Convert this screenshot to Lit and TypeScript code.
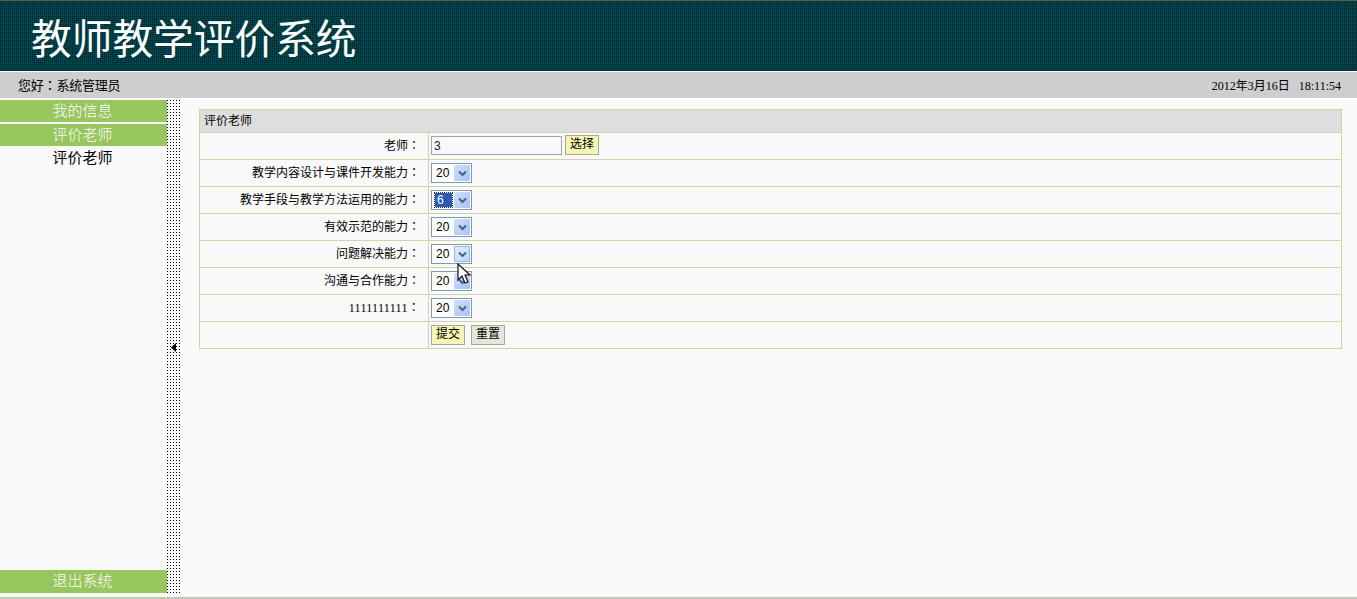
import { LitElement, html, css } from "lit";
import { customElement } from "lit/decorators.js";

const rows: [string, string, boolean?][] = [
  ["教学内容设计与课件开发能力", "20"],
  ["教学手段与教学方法运用的能力", "6", true],
  ["有效示范的能力", "20"],
  ["问题解决能力", "20"],
  ["沟通与合作能力", "20"],
  ["1111111111", "20"],
];

@customElement("app-root")
export class AppRoot extends LitElement {
  static styles = css`
    :host { display: flex; flex-direction: column; width: 1357px; height: 599px; overflow: hidden; background: #fff;
      font-family: "Liberation Serif", "Noto Sans CJK SC", serif; font-size: 12px; color: #000; }
    .header { height: 71px; flex: none; box-sizing: border-box; border-top: 1px solid #5a5a48; display: flex; align-items: center; padding: 0 0 0 31px;
      background-color: #00505a;
      background-image: repeating-linear-gradient(0deg, rgba(0,0,0,.28) 0 1px, transparent 1px 2px), repeating-linear-gradient(90deg, rgba(0,0,0,.28) 0 1px, transparent 1px 2px);
    }
    .title { font-family: "Noto Sans CJK SC", serif; font-weight: 400; font-size: 40.7px; line-height: 1; color: #fff; padding-top: 2px; }
    .bar { height: 26px; margin-top: 1px; flex: none; background: #cecece; display: flex; justify-content: space-between; align-items: center; padding: 0 16px 0 18px; }
    .bar .cjk { font-family: "Noto Sans CJK SC", sans-serif; font-size: 13px; letter-spacing: -.2px; margin-top: -2px; }
    .colon { font-family: "Noto Sans CJK TC", sans-serif; }
    .time { font-family: "Liberation Serif", "Noto Sans CJK SC", serif; font-size: 12px; margin-left: -1px; margin-top: -1px; }
    .body { flex: 1; display: flex; background: #f9f9f9; margin-top: 1px; border-bottom: 2px solid #c4c8b4; min-height: 0; padding-bottom: 4px; }
    .side { width: 167px; flex: none; display: flex; flex-direction: column; padding-top: 1px; box-sizing: border-box; }
    .item { height: 22px; line-height: 19px; padding-right: 2px; text-align: center; font-family: "Noto Sans CJK SC", sans-serif; font-size: 15px; font-weight: 300; color: #000; }
    .item.green { background: #97c55e; color: #fff; }
    .item.gap { margin-top: 2px; }
    .item.sub { height: 23px; line-height: 21px; font-weight: 400; }
    .item.last { height: 23px; line-height: 20px; }
    .spacer { flex: 1; }
    .split { width: 13px; flex: none; display: flex; align-items: center; justify-content: center;
      background-color: #000;
      background-image: repeating-linear-gradient(0deg, transparent 0 1px, #f9f9f9 1px 3px), repeating-linear-gradient(90deg, transparent 0 1px, #f9f9f9 1px 3px); }
    .split svg { display: block; margin-top: 2px; }
    .main { flex: 1; padding: 10px 15px 0 19px; min-width: 0; }
    .table { border: 1px solid #d0d5a8; border-bottom: none; }
    .cap { height: 22px; line-height: 20px; background: #dedede; border-bottom: 1px solid #d0d5a8; padding-left: 4px; font-family: "Noto Sans CJK SC", sans-serif; font-size: 12px; }
    .row { display: grid; grid-template-columns: 229px 1fr; height: 27px; box-sizing: border-box; border-bottom: 1px solid #d0d5a8; }
    .label { border-right: 1px solid #d0d5a8; text-align: right; padding-right: 8px; line-height: 23px; font-family: "Noto Sans CJK SC", sans-serif; font-size: 12px; }
    .label.num { font-family: "Liberation Serif", "Noto Sans CJK SC", serif; font-size: 12px; letter-spacing: .3px; }
    .val { display: flex; align-items: center; padding-left: 2px; gap: 3px; }
    .input { width: 131px; height: 19px; box-sizing: border-box; border: 1px solid #a5a5a5; background: #f9f9f9; font: 12px "Liberation Sans", sans-serif; line-height: 19px; padding-left: 2px; color: #222; margin-bottom: 1px; }
    .btn { box-sizing: border-box; height: 20px; width: 34px; justify-content: center; border: 1px solid #a5a5a5; background: #f6f6b4; font-family: "Noto Sans CJK SC", sans-serif; font-size: 12px; line-height: 13px; display: flex; align-items: flex-start; }
    .btn.top { margin-top: -3px; }
    .btn.reset { background: #e6e6d8; margin-left: 3px; }
    .btn.sub { margin-top: -1px; }
    .btn.reset { margin-top: -1px; }
    .select { width: 41px; height: 20px; box-sizing: border-box; border: 1px solid #7c9ab5; background: #fff; display: flex; align-items: center; justify-content: space-between; padding: 1px; font: 12px "Liberation Sans", sans-serif; }
    .select .v { padding-left: 3px; }
    .select .v.sel { background: #2a5bb8; color: #fff; width: 17px; height: 14px; margin-left: 2px; padding-left: 2px; box-sizing: border-box; line-height: 14px; outline: 1px dotted #333; }
    .arrow { width: 16px; height: 16px; background: linear-gradient(135deg, #d0dffc, #a9c2f2); border-radius: 1px; display: flex; align-items: center; justify-content: center; }
    .arrow.hover { background: linear-gradient(135deg, #e4f0fe, #b4d6fa); outline: 1px solid #9cb6d8; outline-offset: -1px; }
    .cursor { position: absolute; left: 457px; top: 263px; pointer-events: none; }
  `;

  arrow(hover = false) {
    return html`<span class="arrow ${hover ? "hover" : ""}"><svg width="9" height="7" viewBox="0 0 9 7"><path d="M1 1.5 L4.5 5 L8 1.5" fill="none" stroke="#4d6185" stroke-width="2"/></svg></span>`;
  }

  render() {
    return html`
      <div class="header"><div class="title">教师教学评价系统</div></div>
      <div class="bar"><span class="cjk">您好<span class="colon">：</span>系统管理员</span><span class="time">2012年3月16日&nbsp;&nbsp;&nbsp;18:11:54</span></div>
      <div class="body">
        <div class="side">
          <div class="item green">我的信息</div>
          <div class="item green gap">评价老师</div>
          <div class="item sub">评价老师</div>
          <div class="spacer"></div>
          <div class="item green last">退出系统</div>
        </div>
        <div class="split"><svg width="7" height="9" viewBox="0 0 7 9"><path d="M6 0 L6 9 L1 4.5 Z" fill="#000"/></svg></div>
        <div class="main">
          <div class="table">
            <div class="cap">评价老师</div>
            <div class="row"><div class="label">老师<span class="colon">：</span></div><div class="val"><div class="input">3</div><div class="btn top">选择</div></div></div>
            ${rows.map((r, i) => html`<div class="row"><div class="label ${i === 5 ? "num" : ""}">${r[0]}<span class="colon">：</span></div><div class="val"><div class="select"><span class="v ${r[2] ? "sel" : ""}">${r[1]}</span>${this.arrow(i === 3)}</div></div></div>`)}
            <div class="row"><div class="label"></div><div class="val"><div class="btn sub">提交</div><div class="btn reset">重置</div></div></div>
          </div>
        </div>
      </div>
      <svg class="cursor" width="15" height="24" viewBox="0 0 15 24"><path d="M1 1 L1 17 L5 13 L8 20 L11 19 L8 12 L13 12 Z" fill="#fff" stroke="#111" stroke-width="1.2"/></svg>
    `;
  }
}
